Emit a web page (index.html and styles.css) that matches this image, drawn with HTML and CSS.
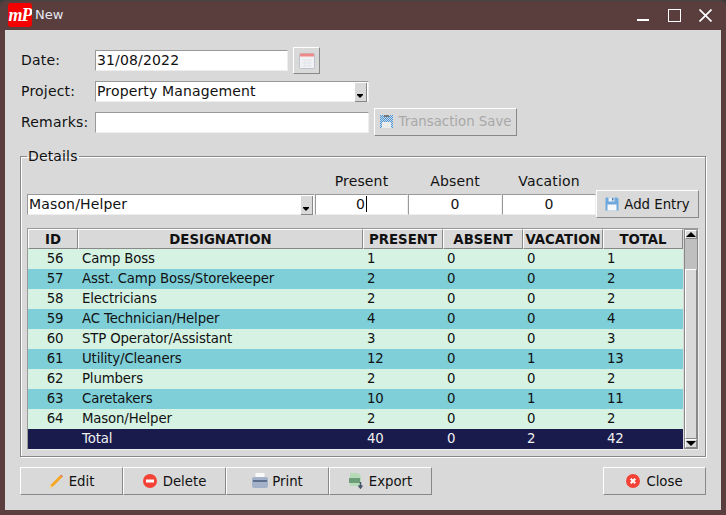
FILE: index.html
```html
<!DOCTYPE html>
<html>
<head>
  <title>New</title>
  <link rel="stylesheet" href="styles.css">
</head>
<body>
  <div class="window">
    <div class="titlebar">
      <span class="logo">mP</span>
      <span class="title">New</span>
      <div class="window-controls">
        <svg width="12" height="13" viewBox="0 0 12 13"><rect x="0" y="10" width="12" height="2" fill="#fff"/></svg>
        <svg width="13" height="13" viewBox="0 0 13 13"><rect x="0.5" y="0.5" width="12" height="12" fill="none" stroke="#fff"/></svg>
        <svg width="13" height="13" viewBox="0 0 13 13"><path d="M0.5 0.5L12.5 12.5M12.5 0.5L0.5 12.5" stroke="#fff" stroke-width="1.7"/></svg>
      </div>
    </div>

    <div class="content">
      <div class="form-row date-row">
        <label class="form-label">Date:</label>
        <div class="field date-field">31/08/2022</div>
        <button class="btn cal-btn" type="button">
          <svg width="16" height="16" viewBox="0 0 16 16">
            <rect x="0.5" y="0.5" width="15" height="15" rx="1" fill="#f2f2f4" stroke="#bcc2ce"/>
            <rect x="1" y="0.5" width="14" height="3" fill="#ee8a8a"/>
            <path d="M3 7H13M3 10H13M3 13H13M6 6V14M10 6V14" stroke="#e0e4eb"/>
          </svg>
        </button>
      </div>

      <div class="form-row project-row">
        <label class="form-label">Project:</label>
        <div class="field combo project-field">
          <span class="combo-text">Property Management</span>
          <span class="combo-arrow"></span>
        </div>
      </div>

      <div class="form-row remarks-row">
        <label class="form-label">Remarks:</label>
        <div class="field remarks-field"></div>
        <button class="btn save-btn" type="button" disabled>
          <svg width="13" height="13" viewBox="0 0 13 13">
            <defs>
              <pattern id="dither" width="2" height="2" patternUnits="userSpaceOnUse">
                <rect width="2" height="2" fill="#d9d9d9"/>
                <rect width="1" height="1" fill="#3f95e0"/>
                <rect x="1" y="1" width="1" height="1" fill="#3f95e0"/>
              </pattern>
            </defs>
            <rect x="0" y="0" width="13" height="13" fill="url(#dither)"/>
            <rect x="2" y="7" width="9" height="6" fill="#ececec"/>
            <rect x="4" y="0" width="5" height="2" fill="#777"/>
          </svg>
          Transaction Save
        </button>
      </div>

      <fieldset class="details">
        <legend>Details</legend>

        <div class="entry-grid">
          <span></span>
          <span class="entry-head">Present</span>
          <span class="entry-head">Absent</span>
          <span class="entry-head">Vacation</span>
          <span></span>

          <div class="field combo">
            <span class="combo-text">Mason/Helper</span>
            <span class="combo-arrow"></span>
          </div>
          <div class="field spin"><span class="caret-wrap">0</span></div>
          <div class="field spin">0</div>
          <div class="field spin">0</div>
          <button class="btn add-btn" type="button">
            <svg width="14" height="14" viewBox="0 0 14 14">
              <path d="M0.5 0.5H12L13.5 2V13.5H0.5Z" fill="#6fa8dc"/>
              <rect x="3.5" y="0.5" width="6" height="4" fill="#eaf0f6"/>
              <rect x="7" y="1" width="1.5" height="2.5" fill="#4a78a8"/>
              <rect x="2.5" y="7.5" width="9" height="6" fill="#f6f8fa"/>
            </svg>
            Add Entry
          </button>
        </div>

        <div class="table-wrap">
          <table class="grid">
            <colgroup>
              <col class="col-id"><col class="col-name">
              <col class="col-num"><col class="col-num"><col class="col-num"><col class="col-num">
            </colgroup>
            <thead>
              <tr><th>ID</th><th>DESIGNATION</th><th>PRESENT</th><th>ABSENT</th><th>VACATION</th><th>TOTAL</th></tr>
            </thead>
            <tbody>
              <tr><td class="id">56</td><td>Camp Boss</td><td>1</td><td>0</td><td>0</td><td>1</td></tr>
              <tr><td class="id">57</td><td>Asst. Camp Boss/Storekeeper</td><td>2</td><td>0</td><td>0</td><td>2</td></tr>
              <tr><td class="id">58</td><td>Electricians</td><td>2</td><td>0</td><td>0</td><td>2</td></tr>
              <tr><td class="id">59</td><td>AC Technician/Helper</td><td>4</td><td>0</td><td>0</td><td>4</td></tr>
              <tr><td class="id">60</td><td>STP Operator/Assistant</td><td>3</td><td>0</td><td>0</td><td>3</td></tr>
              <tr><td class="id">61</td><td>Utility/Cleaners</td><td>12</td><td>0</td><td>1</td><td>13</td></tr>
              <tr><td class="id">62</td><td>Plumbers</td><td>2</td><td>0</td><td>0</td><td>2</td></tr>
              <tr><td class="id">63</td><td>Caretakers</td><td>10</td><td>0</td><td>1</td><td>11</td></tr>
              <tr><td class="id">64</td><td>Mason/Helper</td><td>2</td><td>0</td><td>0</td><td>2</td></tr>
              <tr class="total-row"><td></td><td>Total</td><td>40</td><td>0</td><td>2</td><td>42</td></tr>
            </tbody>
          </table>
          <div class="scrollbar">
            <span class="sb-btn"><span class="tri-up"></span></span>
            <span class="sb-trough"></span>
            <span class="sb-thumb"></span>
            <span class="sb-btn"><span class="tri-down"></span></span>
          </div>
        </div>
      </fieldset>

      <div class="actions">
        <button class="btn action-btn" type="button">
          <svg width="14" height="16" viewBox="0 0 14 16">
            <path d="M0.5 15.5L1.5 12L11 2.5L13 4.5L3.5 14Z" fill="#f5a623"/>
            <path d="M0.5 15.5L1.5 12L3.5 14Z" fill="#f3d9a8"/>
            <path d="M11 2.5L12 1.5L14 3.5L13 4.5Z" fill="#e8734a"/>
          </svg>
          Edit
        </button>
        <button class="btn action-btn" type="button">
          <svg width="14" height="14" viewBox="0 0 14 14">
            <circle cx="7" cy="7" r="7" fill="#f44336"/>
            <rect x="3" y="5.5" width="8" height="3" fill="#fff"/>
          </svg>
          Delete
        </button>
        <button class="btn action-btn print-btn" type="button">
          <svg width="16" height="16" viewBox="0 0 16 16">
            <rect x="3.5" y="0" width="9" height="5" fill="#fafafa"/>
            <rect x="0" y="4" width="16" height="11" rx="2" fill="#a3b2c8"/>
            <rect x="1" y="7" width="14" height="2" fill="#5c6f8c"/>
          </svg>
          Print
        </button>
        <button class="btn action-btn" type="button">
          <svg width="14" height="16" viewBox="0 0 14 16">
            <path d="M1 0H9L12 3V13H1Z" fill="#b5dcb7"/>
            <rect x="0" y="5" width="11" height="5" fill="#6d9c78"/>
            <path d="M11.5 9V14M9.5 12.5L11.5 15L13.5 12.5" stroke="#44546a" stroke-width="1.5" fill="none"/>
          </svg>
          Export
        </button>
        <button class="btn action-btn close-btn" type="button">
          <svg width="14" height="14" viewBox="0 0 14 14">
            <circle cx="7" cy="7" r="7" fill="#f44336"/>
            <path d="M4.7 4.7L9.3 9.3M9.3 4.7L4.7 9.3" stroke="#fff" stroke-width="2"/>
          </svg>
          Close
        </button>
      </div>
    </div>
  </div>
</body>
</html>
```

FILE: styles.css
```css
/* Desktop-style dialog, all the widgets use the same grey and bevels */
html, body {
  margin: 0;
  height: 100%;
  background-color: #3c3c3c;
}

body {
  font-family: 'DejaVu Sans', sans-serif;
  font-size: 14px;
  color: #111;
}

.window {
  width: 726px;
  height: 515px;
  box-sizing: border-box;
  padding: 0 5px 5px 5px;
  border-top: 1px solid #444;
  border-radius: 6px 6px 0 0;
  background-color: #5a3e3e;
  display: flex;
  flex-direction: column;
}

.titlebar {
  height: 29px;
  flex: none;
  display: flex;
  align-items: center;
  color: #e4e7f2;
}

.logo {
  width: 24px;
  height: 24px;
  margin: -1px 3px 0 3px;
  border-radius: 3px;
  background-color: #f40000;
  color: #fff;
  font-family: 'Liberation Serif', serif;
  font-style: italic;
  font-weight: bold;
  font-size: 18px;
  line-height: 24px;
  letter-spacing: -1px;
  text-align: center;
  overflow: hidden;
}

.title {
  margin-top: -2px;
  font-size: 13px;
}

.window-controls {
  margin-left: auto;
  margin-right: 9px;
  display: flex;
  align-items: center;
  gap: 18px;
}

.window-controls svg:first-child {
  margin-right: 1px;
}

.content {
  flex: 1;
  width: 716px;
  box-sizing: border-box;
  padding: 17px 15px 0 15px;
  background-color: #d9d9d9;
}

.form-row {
  display: flex;
  align-items: flex-start;
  padding-left: 1px;
}

.date-row {
  height: 27px;
}

.project-row {
  height: 21px;
  margin-top: 7px;
}

.remarks-row {
  height: 28px;
  margin-top: 6px;
}

.form-label {
  width: 74px;
  flex: none;
  line-height: 27px;
  letter-spacing: 0.2px;
}

.project-row .form-label {
  line-height: 21px;
}

.remarks-row .form-label {
  line-height: 28px;
}

.field {
  box-sizing: border-box;
  height: 21px;
  padding: 0 1px;
  border-top: 1px solid #999;
  border-left: 1px solid #999;
  border-right: 1px solid #eee;
  border-bottom: 1px solid #eee;
  background-color: #fff;
  line-height: 19px;
  letter-spacing: 0.15px;
  white-space: nowrap;
}

.date-field {
  width: 193px;
  margin-top: 3px;
}

.project-field {
  width: 274px;
}

.remarks-field {
  width: 274px;
  margin-top: 4px;
}

.combo {
  display: flex;
  padding-right: 0;
}

.combo-text {
  flex: 1;
}

.combo-arrow {
  width: 11px;
  height: 18px;
  margin-top: 1px;
  margin-right: 1px;
  border-right: 1px solid #888;
  border-bottom: 1px solid #888;
  box-sizing: content-box;
  background-color: #d9d9d9;
  position: relative;
}

.combo-arrow::after {
  content: "";
  position: absolute;
  left: 2px;
  bottom: 3px;
  border-left: 3.5px solid transparent;
  border-right: 3.5px solid transparent;
  border-top: 3px solid #000;
  box-shadow: 0 -1px 0 0 #000;
}

.btn {
  box-sizing: border-box;
  height: 28px;
  padding: 0;
  border-top: 1px solid #fff;
  border-left: 1px solid #fff;
  border-right: 1px solid #888;
  border-bottom: 1px solid #888;
  background-color: #d9d9d9;
  color: #111;
  font-family: inherit;
  font-size: 13.3px;
  display: flex;
  align-items: center;
  justify-content: center;
  gap: 6px;
}

.cal-btn {
  width: 27px;
  height: 27px;
  margin-left: 5px;
}

.save-btn {
  width: 143px;
  margin-left: 5px;
  color: #a8a8a8;
  padding-bottom: 2px;
}

.print-btn {
  gap: 4px;
}

.details {
  margin: 12px 0 0 0;
  padding: 7px 6px 6px 6px;
  width: 686px;
  height: 309px;
  box-sizing: border-box;
  border: 1px solid #888;
  box-shadow: inset 1px 1px 0 #fff, 1px 1px 0 #fff;
}

.details legend {
  margin-left: 0;
  padding: 0 1px;
  line-height: 17px;
  letter-spacing: 0.15px;
}

.entry-grid {
  display: grid;
  grid-template-columns: 288px 93px 94px 94px 103px;
  grid-template-rows: 18px 28px;
  align-items: center;
}

.entry-head {
  text-align: center;
  letter-spacing: 0.15px;
}

.spin {
  text-align: center;
}

.caret-wrap {
  border-right: 1px solid #000;
  padding-right: 1px;
}

.add-btn {
  width: 103px;
  gap: 5px;
}

.table-wrap {
  margin-top: 10px;
  width: 672px;
  height: 222px;
  box-sizing: border-box;
  border-top: 1px solid #999;
  border-left: 1px solid #999;
  border-right: 1px solid #eee;
  border-bottom: 1px solid #eee;
  display: flex;
}

.grid {
  width: 655px;
  height: 220px;
  flex: none;
  table-layout: fixed;
  border-collapse: separate;
  border-spacing: 0;
  font-size: 13.3px;
}

.col-id {
  width: 50px;
}

.col-name {
  width: 285px;
}

.col-num {
  width: 80px;
}

.grid th {
  box-sizing: border-box;
  height: 20px;
  padding: 0;
  border-top: 1px solid #fff;
  border-left: 1px solid #fff;
  border-right: 1px solid #888;
  border-bottom: 1px solid #888;
  background-color: #d9d9d9;
  font-weight: bold;
  text-align: center;
}

.grid td {
  height: 20px;
  padding: 0 0 0 4px;
  line-height: 18px;
  letter-spacing: -0.15px;
  white-space: nowrap;
}

.grid tbody tr:nth-child(odd) {
  background-color: #d5f2e3;
}

.grid tbody tr:nth-child(even) {
  background-color: #7fcfd8;
}

.grid td.id {
  padding: 0 0 0 4px;
  text-align: center;
}

.grid tbody tr.total-row {
  background-color: #191b4d;
  color: #f0f0f0;
}

.scrollbar {
  width: 15px;
  height: 220px;
  margin-left: 1px;
  box-sizing: border-box;
  border: 1px solid #888;
  border-top-color: #999;
  background-color: #bfbfbf;
  display: flex;
  flex-direction: column;
}

.sb-btn {
  height: 7px;
  flex: none;
  border-top: 1px solid #fff;
  border-left: 1px solid #fff;
  border-right: 1px solid #888;
  border-bottom: 1px solid #888;
  background-color: #d9d9d9;
  display: flex;
  align-items: center;
  justify-content: center;
}

.tri-up {
  border-left: 5px solid transparent;
  border-right: 5px solid transparent;
  border-bottom: 5px solid #000;
}

.tri-down {
  border-left: 5px solid transparent;
  border-right: 5px solid transparent;
  border-top: 5px solid #000;
}

.sb-trough {
  height: 30px;
  flex: none;
}

.sb-thumb {
  flex: 1;
  border-top: 1px solid #fff;
  border-left: 1px solid #fff;
  border-right: 1px solid #888;
  border-bottom: 1px solid #888;
  background-color: #d9d9d9;
}

.actions {
  display: flex;
  margin-top: 10px;
}

.action-btn {
  width: 103px;
}

.close-btn {
  margin-left: auto;
}
```
